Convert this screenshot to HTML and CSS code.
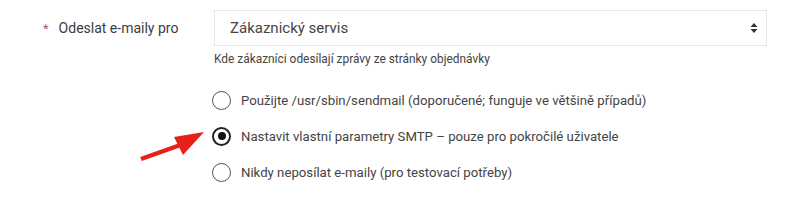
FILE: index.html
```html
<!DOCTYPE html>
<html lang="cs">
<head>
<meta charset="utf-8">
<link rel="stylesheet" href="styles.css">
</head>
<body>
<div class="form">
  <div class="field">
    <div class="label"><span class="req">*</span><span>Odeslat e-maily pro</span></div>
    <div class="control">
      <div class="select">
        <span>Zákaznický servis</span>
        <svg class="caret" width="8" height="12" viewBox="0 0 8 12"><path d="M4 1 L7.5 5 H0.5 Z M4 11 L7.5 7 H0.5 Z" fill="#333"/></svg>
      </div>
      <div class="help">Kde zákazníci odesílají zprávy ze stránky objednávky</div>
    </div>
  </div>
  <div class="options">
    <label class="opt"><span class="radio"></span><span>Použijte /usr/sbin/sendmail (doporučené; funguje ve většině případů)</span></label>
    <label class="opt"><span class="radio checked"></span><span>Nastavit vlastní parametry SMTP – pouze pro pokročilé uživatele</span></label>
    <label class="opt"><span class="radio"></span><span>Nikdy neposílat e-maily (pro testovací potřeby)</span></label>
  </div>
</div>
<svg class="arrow" width="80" height="40" viewBox="0 0 80 40">
  <line x1="3" y1="31" x2="48" y2="15" stroke="#e8201a" stroke-width="4.5" stroke-linecap="butt"/>
  <polygon points="36,9 66,4 45,27" fill="#e8201a"/>
</svg>
</body>
</html>
```
FILE: styles.css
```css
html, body { margin: 0; padding: 0; background: #fff; }
body {
  font-family: Roboto, "Noto Sans", sans-serif;
  color: #3d3d3d;
  width: 800px;
  height: 201px;
  position: relative;
  overflow: hidden;
}
.form { padding-top: 10px; }
.field { display: flex; }
.label {
  width: 214px;
  box-sizing: border-box;
  padding-left: 43px;
  display: flex;
  align-items: center;
  height: 36px;
  font-size: 14px;
}
.req { color: #b5586a; margin-right: 10px; font-size: 13px; }
.control { width: 553px; }
.select {
  height: 36px;
  box-sizing: border-box;
  border: 1px solid #e6e6e6;
  display: flex;
  align-items: center;
  justify-content: space-between;
  padding: 0 8px 0 15px;
  font-size: 15px;
  color: #444;
}
.help { font-size: 11.9px; margin-top: 6px; color: #444; }
.options {
  margin-left: 212px;
  margin-top: 24px;
  display: flex;
  flex-direction: column;
  gap: 16px;
}
.opt { display: flex; align-items: center; gap: 10px; font-size: 13.2px; color: #444; height: 20px; }
.radio {
  width: 19px; height: 19px;
  box-sizing: border-box;
  border: 1.5px solid #555;
  border-radius: 50%;
  display: flex; align-items: center; justify-content: center;
}
.radio.checked { border: 2px solid #222; }
.radio.checked::after {
  content: "";
  width: 8px; height: 8px; border-radius: 50%; background: #111;
}
.arrow { position: absolute; left: 138px; top: 128px; }
```
